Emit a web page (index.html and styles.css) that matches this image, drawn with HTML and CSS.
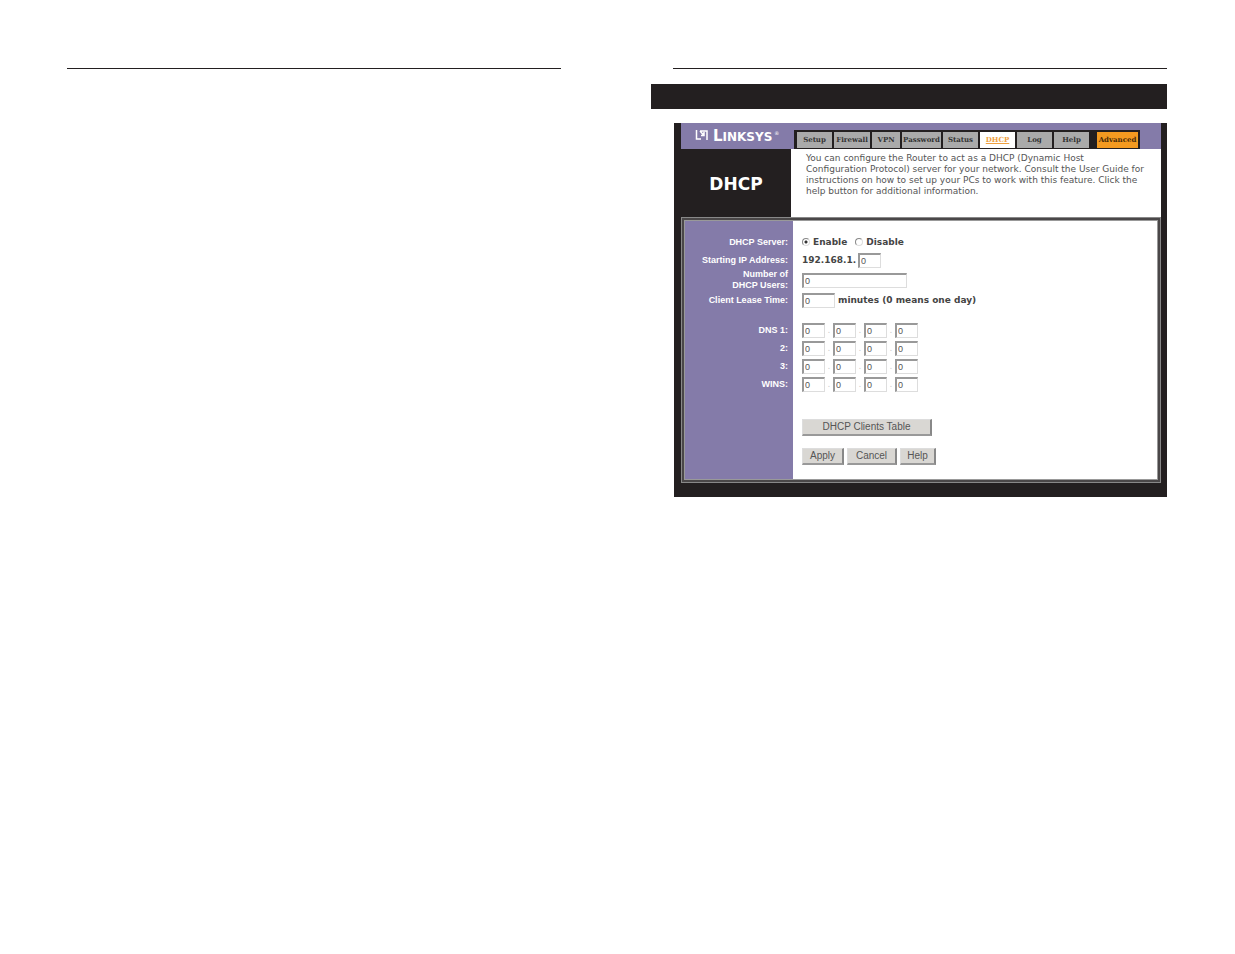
FILE: index.html
```
<!DOCTYPE html>
<html lang="en">
<head>
<meta charset="utf-8">
<title>DHCP</title>
<link rel="stylesheet" href="styles.css">
</head>
<body>
<main class="spread">
  <section class="leaf"></section>
  <section class="leaf">
    <div class="band"></div>
    <div class="router">
      <header class="top">
        <div class="brand">
          <svg class="mark" viewBox="0 0 14 12" aria-hidden="true"><path d="M1.5 1v9H6M5 2h7v9M5 2l4 4.500M9 3v3.500H6" fill="none" stroke="#fff" stroke-width="1.500"/></svg>
          <span class="name">L<small>INKSYS</small></span><span class="reg">®</span>
        </div>
        <nav class="tabs">
          <a class="tab w35" href="#">Setup</a>
          <a class="tab w36" href="#">Firewall</a>
          <a class="tab w28" href="#">VPN</a>
          <a class="tab w39" href="#">Password</a>
          <a class="tab w35" href="#">Status</a>
          <a class="tab w35 current" href="#">DHCP</a>
          <a class="tab w35" href="#">Log</a>
          <a class="tab w35" href="#">Help</a>
          <a class="tab advanced" href="#">Advanced</a>
        </nav>
      </header>
      <div class="intro">
        <h1 class="title">DHCP</h1>
        <p class="about">You can configure the Router to act as a DHCP (Dynamic Host<br>Configuration Protocol) server for your network. Consult the User Guide for<br>instructions on how to set up your PCs to work with this feature. Click the<br>help button for additional information.</p>
      </div>
      <form class="form">
        <div class="row">
          <span class="label" id="server">DHCP Server:</span>
          <div class="value" role="radiogroup" aria-labelledby="server">
            <label class="choice"><input class="radio" type="radio" name="server" checked>Enable</label>
            <label class="choice"><input class="radio" type="radio" name="server">Disable</label>
          </div>
        </div>
        <div class="row">
          <label class="label" for="start">Starting IP Address:</label>
          <div class="value">192.168.1.<input class="box octet start" id="start" value="0"></div>
        </div>
        <div class="row tall">
          <label class="label" for="users">Number of<br>DHCP Users:</label>
          <div class="value"><input class="box users" id="users" value="0"></div>
        </div>
        <div class="row">
          <label class="label" for="lease">Client Lease Time:</label>
          <div class="value"><input class="box lease" id="lease" value="0">minutes (0 means one day)</div>
        </div>
        <div class="row first">
          <label class="label" for="dns1">DNS 1:</label>
          <div class="value ip"><input class="box octet" id="dns1" value="0"><i>.</i><input class="box octet" aria-label="DNS 1 second" value="0"><i>.</i><input class="box octet" aria-label="DNS 1 third" value="0"><i>.</i><input class="box octet" aria-label="DNS 1 fourth" value="0"></div>
        </div>
        <div class="row">
          <label class="label" for="dns2">2:</label>
          <div class="value ip"><input class="box octet" id="dns2" value="0"><i>.</i><input class="box octet" aria-label="DNS 2 second" value="0"><i>.</i><input class="box octet" aria-label="DNS 2 third" value="0"><i>.</i><input class="box octet" aria-label="DNS 2 fourth" value="0"></div>
        </div>
        <div class="row">
          <label class="label" for="dns3">3:</label>
          <div class="value ip"><input class="box octet" id="dns3" value="0"><i>.</i><input class="box octet" aria-label="DNS 3 second" value="0"><i>.</i><input class="box octet" aria-label="DNS 3 third" value="0"><i>.</i><input class="box octet" aria-label="DNS 3 fourth" value="0"></div>
        </div>
        <div class="row">
          <label class="label" for="wins">WINS:</label>
          <div class="value ip"><input class="box octet" id="wins" value="0"><i>.</i><input class="box octet" aria-label="WINS second" value="0"><i>.</i><input class="box octet" aria-label="WINS third" value="0"><i>.</i><input class="box octet" aria-label="WINS fourth" value="0"></div>
        </div>
        <div class="actions">
          <button class="button clients" type="button">DHCP Clients Table</button>
          <div class="buttons">
            <button class="button apply" type="button">Apply</button>
            <button class="button cancel" type="button">Cancel</button>
            <button class="button help" type="button">Help</button>
          </div>
        </div>
      </form>
    </div>
  </section>
</main>
</body>
</html>
```
FILE: styles.css
```
* { box-sizing: border-box; }
body { margin: 0; background: #fff; color: #444; font-family: "DejaVu Sans", sans-serif; font-size: 9px; }
.spread { display: grid; grid-template-columns: 1fr 1fr; align-items: start; gap: 112px; padding: 68px 68px 0 67px; }
.leaf { min-width: 0; border-top: 1px solid #231f20; }
.band { height: 25px; margin: 15px 0 14px -22px; background: #231f20; }
.router { margin-left: 1px; padding: 0 6px 14px 7px; background: #231f20; }

.top { display: flex; height: 26px; background: #847ba9; }
.brand { display: flex; flex: 0 0 113px; gap: 4px; padding: 6px 0 0 14px; color: #fff; }
.mark { width: 14px; height: 12px; }
.name { font: bold 15px/14px "DejaVu Sans", sans-serif; }
.name small { font-size: 12px; }
.reg { margin-left: -2px; font-size: 5px; line-height: 8px; }
.tabs { display: flex; gap: 2px; margin-top: 7px; padding: 2px 2px 1px 3px; background: #231f20; }
.tab { overflow: hidden; background: #aaa; color: #333; font: bold 7px/16px "DejaVu Serif", serif; text-align: center; text-decoration: none; white-space: nowrap; }
.w28 { width: 28px; }
.w35 { width: 35px; }
.w36 { width: 36px; }
.w39 { width: 39px; }
.current { background: #fff; color: #f0a040; text-decoration: underline; }
.advanced { width: 41px; margin-left: 6px; background: #f49a20; color: #4a2c08; }

.intro { display: flex; height: 68px; }
.title { flex: 0 0 110px; margin: 0; color: #fff; font: bold 17px/70px "DejaVu Sans", sans-serif; text-align: center; }
.about { flex: 1; margin: 0; padding: 4px 0 0 15px; background: #fff; color: #555; line-height: 11px; white-space: nowrap; }

.form { padding: 13px 0 15px; border: 3px solid #4a4748; outline: 1px solid #888; outline-offset: -1px; background: linear-gradient(to right, #847ba9 109px, #fff 109px); box-shadow: inset 0 0 0 1px #999; }
.row { display: flex; align-items: center; height: 18px; }
.row.tall { height: 22px; }
.row.first { margin-top: 12px; }
.label { flex: 0 0 104px; color: #fff; font: bold 9px/11px "Liberation Sans", sans-serif; text-align: right; }
.value { display: flex; align-items: center; padding-left: 14px; font-weight: bold; white-space: nowrap; }
.choice { display: flex; align-items: center; gap: 3px; margin-right: 8px; }
.radio { appearance: none; width: 8px; height: 8px; margin: 0; border: 1px solid #888; border-right-color: #ddd; border-bottom-color: #ddd; border-radius: 50%; background: #fff; }
.radio:checked { background: radial-gradient(#333 1px, #fff 2px); }
.box { height: 15px; margin: 0; padding: 0 1px; border: 1px solid #ddd; border-top: 2px solid #999; border-left: 2px solid #999; border-radius: 0; background: #fff; color: #555; font: 9px/12px "Liberation Sans", sans-serif; }
.octet { width: 23px; }
.start { margin-left: 2px; }
.users { width: 105px; }
.lease { width: 33px; margin-right: 3px; }
.ip i { width: 8px; color: #ccc; font-style: normal; font-weight: normal; text-align: center; }
.actions { display: flex; flex-direction: column; align-items: flex-start; gap: 12px; padding: 26px 0 0 118px; }
.buttons { display: flex; gap: 3px; }
.button { height: 17px; padding: 0; border: 1px solid #ddd; border-right: 2px solid #888; border-bottom: 2px solid #999; border-radius: 0; background: #d9d7d3; color: #555; font: 10px/14px "Liberation Sans", sans-serif; }
.clients { width: 130px; }
.apply { width: 42px; }
.cancel { width: 50px; }
.help { width: 36px; }
```
